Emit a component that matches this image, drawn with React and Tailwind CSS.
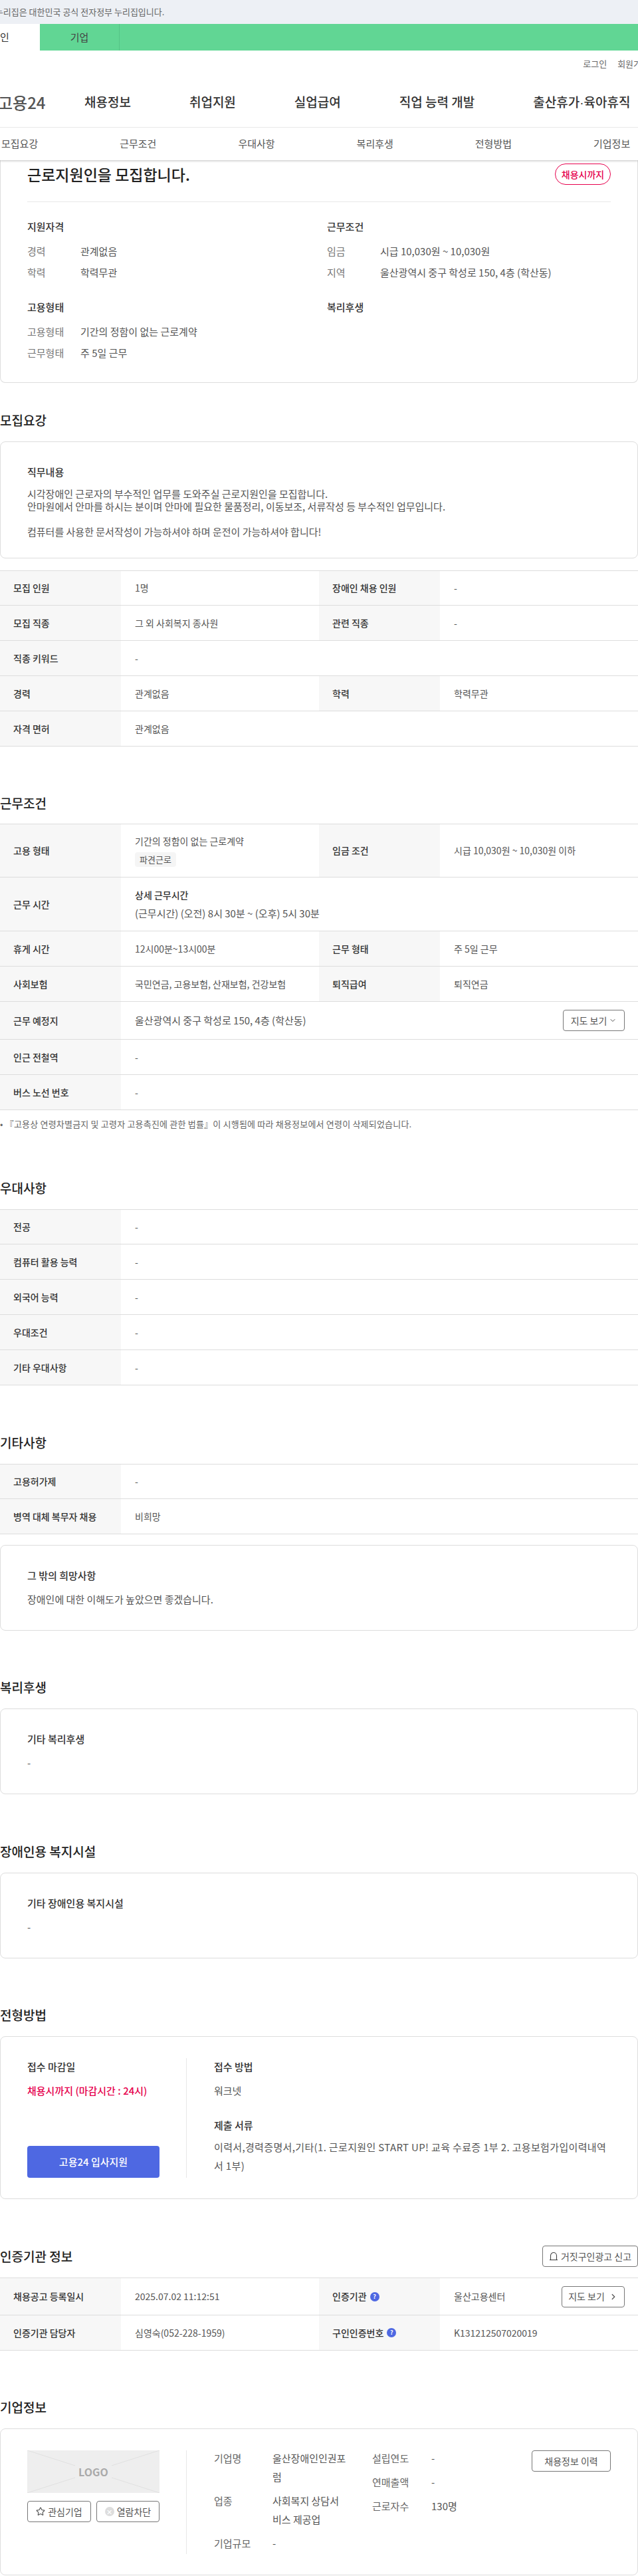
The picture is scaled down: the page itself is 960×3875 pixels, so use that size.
import React from 'react';
import { ChevronDown, ChevronRight, Star } from 'lucide-react';

const SUB_NAV = ['모집요강', '근무조건', '우대사항', '복리후생', '전형방법', '기업정보'];

function Heading({ children, className = '' }) {
  return <h2 className={`h-[28px] leading-[28px] text-[19px] font-medium text-[#222] ${className}`}>{children}</h2>;
}

function Th({ children, className = '' }) {
  return (
    <div className={`w-[182px] flex-shrink-0 self-stretch bg-[#f7f7f7] pl-[20px] flex items-center text-[14px] font-medium text-[#333] ${className}`}>
      {children}
    </div>
  );
}

function Td({ children, className = '' }) {
  return <div className={`pl-[21px] flex items-center text-[14px] text-[#555] ${className}`}>{children}</div>;
}

// row with one or two label/value pairs
function Row({ cells, h = 'h-[53px] first:h-[52px]' }) {
  return (
    <div className={`flex border-b border-[#ddd] ${h}`}>
      {cells.map(([label, value], i) => (
        <React.Fragment key={i}>
          <Th>{label}</Th>
          <Td className={cells.length === 2 && i === 0 ? 'w-[298px]' : 'flex-1'}>{value}</Td>
        </React.Fragment>
      ))}
    </div>
  );
}

function Table({ rows, className = 'mt-[18px]' }) {
  return (
    <div className={`border-t border-[#ddd] ${className}`}>
      {rows.map((cells, i) => <Row key={i} cells={cells} />)}
    </div>
  );
}

function TextCard({ title, children, className = 'mt-[18px]', pb = 'pb-[37px]' }) {
  return (
    <div className={`border border-[#ddd] rounded-[8px] px-[40px] pt-[32px] ${pb} ${className}`}>
      <h3 className="h-[26px] leading-[26px] text-[15px] font-medium text-[#333]">{title}</h3>
      {children}
    </div>
  );
}

function SummaryBlock({ title, rows, className = '' }) {
  return (
    <div className={className}>
      <h3 className="h-[26px] leading-[26px] text-[15px] font-medium text-[#333]">{title}</h3>
      <div className="mt-[11px] flex flex-col gap-[6px]">
        {rows.map(([label, value]) => (
          <div key={label} className="flex h-[26px] items-center text-[15px]">
            <span className="w-[80px] text-[#777]">{label}</span>
            <span className="text-[#555]">{value}</span>
          </div>
        ))}
      </div>
    </div>
  );
}

function HelpDot() {
  return (
    <span className="ml-[5px] inline-flex h-[14px] w-[14px] items-center justify-center rounded-full bg-[#4e68e2] text-[9px] font-bold text-white">?</span>
  );
}

function OutlineBtn({ children, className = '' }) {
  return (
    <button className={`flex items-center justify-center border border-[#777] rounded-[4px] bg-white text-[14px] text-[#555] ${className}`}>
      {children}
    </button>
  );
}

function Header() {
  return (
    <header className="relative z-10 bg-white shadow-[0_1px_3px_rgba(0,0,0,0.25)]">
      <div className="h-[36px] bg-[#edf0f5] -ml-[22px] flex items-center text-[13px] text-[#666]">
        이 누리집은 대한민국 공식 전자정부 누리집입니다.
      </div>
      <div className="h-[40px] bg-[#61d694] flex text-[15px] text-[#444]">
        <div className="-ml-[60px] w-[120px] bg-white flex items-center justify-center flex-shrink-0 text-[#333]">개인</div>
        <div className="w-[120px] border-r border-[#56c486] flex items-center justify-center flex-shrink-0">기업</div>
      </div>
      <div className="h-[116px] border-b border-[#e8e8e8]">
        <div className="flex justify-end gap-[16px] -mr-[17px] pt-[10px] text-[13px] text-[#666] leading-[20px] whitespace-nowrap">
          <span>로그인</span>
          <span>회원가입</span>
        </div>
        <div className="flex items-center mt-[28px] h-[40px] whitespace-nowrap">
          <div className="-ml-[3px] w-[77px] flex-shrink-0 text-[24px] font-medium text-[#555]">고용24</div>
          <nav className="ml-[53px] flex gap-[88px] text-[19px] font-medium text-[#333]">
            <span>채용정보</span>
            <span>취업지원</span>
            <span>실업급여</span>
            <span>직업 능력 개발</span>
            <span>출산휴가<span className="font-['Liberation_Sans',sans-serif]">·</span>육아휴직</span>
          </nav>
        </div>
      </div>
      <nav className="h-[49px] pl-[2px] flex items-center gap-[123px] text-[15px] text-[#555] whitespace-nowrap">
        {SUB_NAV.map((s) => <span key={s}>{s}</span>)}
      </nav>
    </header>
  );
}

export default function App() {
  return (
    <div className="w-[960px] h-[3875px] overflow-hidden bg-white font-['Noto_Sans_CJK_KR','Noto_Sans',sans-serif]">
      <Header />

      {/* summary card, its top runs under the sticky header */}
      <section className="border border-t-0 border-[#ddd] rounded-b-[8px] h-[335px] px-[40px]">
        <div className="flex items-center justify-between pt-[5px] h-[37px]">
          <h1 className="text-[23px] font-medium text-[#222] leading-[32px] -mt-[1px]">근로지원인을 모집합니다.</h1>
          <span className="h-[32px] w-[84px] rounded-full border border-[#e6004d] flex items-center justify-center text-[14px] font-medium text-[#e6004d]">채용시까지</span>
        </div>
        <div className="mt-[25px] border-t border-[#e8e8e8]" />
        <div className="mt-[24px] grid grid-cols-[451px_1fr] gap-y-[26px]">
          <SummaryBlock title="지원자격" rows={[['경력', '관계없음'], ['학력', '학력무관']]} />
          <SummaryBlock title="근무조건" rows={[['임금', '시급 10,030원 ~ 10,030원'], ['지역', '울산광역시 중구 학성로 150, 4층 (학산동)']]} />
          <SummaryBlock title="고용형태" rows={[['고용형태', '기간의 정함이 없는 근로계약'], ['근무형태', '주 5일 근무']]} />
          <SummaryBlock title="복리후생" rows={[]} />
        </div>
      </section>

      <Heading className="mt-[42px]">모집요강</Heading>
      <TextCard title="직무내용" pb="pb-[30px]">
        <p className="mt-[10px] text-[15px] leading-[19px] text-[#555]">
          시각장애인 근로자의 부수적인 업무를 도와주실 근로지원인을 모집합니다.<br />
          안마원에서 안마를 하시는 분이며 안마에 필요한 물품정리, 이동보조, 서류작성 등 부수적인 업무입니다.<br />
          <br />
          컴퓨터를 사용한 문서작성이 가능하셔야 하며 운전이 가능하셔야 합니다!
        </p>
      </TextCard>
      <Table rows={[
        [['모집 인원', '1명'], ['장애인 채용 인원', '-']],
        [['모집 직종', '그 외 사회복지 종사원'], ['관련 직종', '-']],
        [['직종 키워드', '-']],
        [['경력', '관계없음'], ['학력', '학력무관']],
        [['자격 면허', '관계없음']],
      ]} />

      <Heading className="mt-[71px]">근무조건</Heading>
      <div className="mt-[17px] border-t border-[#ddd]">
        <Row h="h-[80px]" cells={[
          ['고용 형태', (
            <div>
              <div className="leading-[20px]">기간의 정함이 없는 근로계약</div>
              <span className="mt-[7px] inline-block h-[22px] leading-[22px] px-[7px] rounded-[4px] bg-[#f5f5f5] text-[13px] text-[#555]">파견근로</span>
            </div>
          )],
          ['임금 조건', '시급 10,030원 ~ 10,030원 이하'],
        ]} />
        <Row h="h-[81px]" cells={[
          ['근무 시간', (
            <div className="text-[15px]">
              <div className="leading-[28px] font-medium text-[14px] text-[#333]">상세 근무시간</div>
              <div className="leading-[28px]">(근무시간) (오전) 8시 30분 ~ (오후) 5시 30분</div>
            </div>
          )],
        ]} />
        <Row h="h-[53px]" cells={[['휴게 시간', '12시00분~13시00분'], ['근무 형태', '주 5일 근무']]} />
        <Row h="h-[53px]" cells={[['사회보험', '국민연금, 고용보험, 산재보험, 건강보험'], ['퇴직급여', '퇴직연금']]} />
        <div className="flex h-[57px] border-b border-[#ddd]">
          <Th>근무 예정지</Th>
          <Td className="flex-1 justify-between pr-[20px] text-[15px]">
            <span>울산광역시 중구 학성로 150, 4층 (학산동)</span>
            <OutlineBtn className="h-[32px] w-[93px] gap-[3px]">지도 보기 <ChevronDown size={12} /></OutlineBtn>
          </Td>
        </div>
        <Row h="h-[53px]" cells={[['인근 전철역', '-']]} />
        <Row h="h-[53px]" cells={[['버스 노선 번호', '-']]} />
      </div>
      <p className="mt-[11px] h-[20px] leading-[20px] text-[13px] tracking-[0.2px] text-[#666] whitespace-nowrap">
        • 『고용상 연령차별금지 및 고령자 고용촉진에 관한 법률』이 시행됨에 따라 채용정보에서 연령이 삭제되었습니다.
      </p>

      <Heading className="mt-[72px]">우대사항</Heading>
      <Table rows={[
        [['전공', '-']],
        [['컴퓨터 활용 능력', '-']],
        [['외국어 능력', '-']],
        [['우대조건', '-']],
        [['기타 우대사항', '-']],
      ]} />

      <Heading className="mt-[72px]">기타사항</Heading>
      <Table rows={[
        [['고용허가제', '-']],
        [['병역 대체 복무자 채용', '비희망']],
      ]} />
      <TextCard title="그 밖의 희망사항" className="mt-[16px]">
        <p className="mt-[13px] text-[15px] leading-[19px] text-[#555]">장애인에 대한 이해도가 높았으면 좋겠습니다.</p>
      </TextCard>

      <Heading className="mt-[71px]">복리후생</Heading>
      <TextCard title="기타 복리후생">
        <p className="mt-[13px] text-[15px] leading-[19px] text-[#555]">-</p>
      </TextCard>

      <Heading className="mt-[72px]">장애인용 복지시설</Heading>
      <TextCard title="기타 장애인용 복지시설">
        <p className="mt-[13px] text-[15px] leading-[19px] text-[#555]">-</p>
      </TextCard>

      <Heading className="mt-[71px]">전형방법</Heading>
      <div className="mt-[18px] h-[245px] border border-[#ddd] rounded-[8px] px-[40px] pt-[32px] flex">
        <div className="w-[240px] flex-shrink-0 border-r border-[#e8e8e8] pr-[40px] h-[180px] flex flex-col">
          <h3 className="h-[26px] leading-[26px] text-[15px] font-medium text-[#333]">접수 마감일</h3>
          <p className="mt-[10px] h-[26px] leading-[26px] text-[15px] font-medium text-[#e6004d]">채용시까지 (마감시간 : 24시)</p>
          <button className="mt-auto h-[48px] rounded-[4px] bg-[#4e68e2] text-[15px] font-medium text-white">고용24 입사지원</button>
        </div>
        <div className="pl-[41px] flex-1">
          <h3 className="h-[26px] leading-[26px] text-[15px] font-medium text-[#333]">접수 방법</h3>
          <p className="mt-[10px] h-[26px] leading-[26px] text-[15px] text-[#555]">워크넷</p>
          <h3 className="mt-[26px] h-[26px] leading-[26px] text-[15px] font-medium text-[#333]">제출 서류</h3>
          <p className="mt-[6px] text-[15px] leading-[28px] tracking-[0.35px] text-[#555] break-all">이력서,경력증명서,기타(1. 근로지원인 START UP! 교육 수료증 1부 2. 고용보험가입이력내역서 1부)</p>
        </div>
      </div>

      <div className="mt-[70px] flex items-center justify-between">
        <Heading>인증기관 정보</Heading>
        <OutlineBtn className="h-[32px] w-[144px] gap-[4px]">
          <svg width="14" height="14" viewBox="0 0 14 14" fill="none" stroke="#444" strokeWidth="1.1">
            <path d="M2.5 12.5V6a4.5 4.5 0 0 1 9 0v6.5" />
            <path d="M1 12.5h12" />
          </svg>
          거짓구인광고 신고
        </OutlineBtn>
      </div>
      <div className="mt-[16px] border-t border-[#ddd]">
        <div className="flex h-[56px] border-b border-[#ddd]">
          <Th>채용공고 등록일시</Th>
          <Td className="w-[298px]">2025.07.02 11:12:51</Td>
          <Th>인증기관<HelpDot /></Th>
          <Td className="flex-1 justify-between pr-[20px]">
            <span>울산고용센터</span>
            <OutlineBtn className="h-[32px] w-[95px] gap-[6px]">지도 보기 <ChevronRight size={14} strokeWidth={2.2} /></OutlineBtn>
          </Td>
        </div>
        <Row h="h-[53px]" cells={[['인증기관 담당자', '심영숙(052-228-1959)'], [<span key="n" className="flex items-center">구인인증번호<HelpDot /></span>, 'K131212507020019']]} />
      </div>

      <Heading className="mt-[71px]">기업정보</Heading>
      <div className="mt-[18px] h-[221px] border border-[#ddd] rounded-[8px] px-[40px] pt-[32px] flex">
        <div className="w-[240px] flex-shrink-0 border-r border-[#e8e8e8] pr-[40px] h-[156px]">
          <div className="relative h-[64px] bg-[#eeeeee] flex items-center justify-center text-[16px] font-bold text-[#aaa]">
            <svg className="absolute inset-0" width="199" height="64" viewBox="0 0 199 64" stroke="#e0e0e0" strokeWidth="1">
              <path d="M0 0L72 23M199 0L127 23M0 64L72 41M199 64L127 41" />
            </svg>
            LOGO
          </div>
          <div className="mt-[12px] flex justify-between">
            <OutlineBtn className="h-[32px] w-[96px] gap-[4px]"><Star size={14} />관심기업</OutlineBtn>
            <OutlineBtn className="h-[32px] w-[95px] gap-[4px]">
              <span className="h-[14px] w-[14px] rounded-full bg-[#ddd] flex items-center justify-center text-[11px] leading-none text-white">✕</span>
              열람차단
            </OutlineBtn>
          </div>
        </div>
        <div className="pl-[41px] flex-1 flex items-start text-[15px] text-[#555]">
          <div className="w-[238px] flex-shrink-0">
            <div className="flex leading-[28px] -mt-[2px]">
              <span className="w-[88px] flex-shrink-0 text-[#666]">기업명</span>
              <span className="w-[112px] break-all">울산장애인인권포럼</span>
            </div>
            <div className="mt-[8px] flex leading-[28px]">
              <span className="w-[88px] flex-shrink-0 text-[#666]">업종</span>
              <span className="w-[112px]">사회복지 상담서비스 제공업</span>
            </div>
            <div className="mt-[8px] flex leading-[28px]">
              <span className="w-[88px] flex-shrink-0 text-[#666]">기업규모</span>
              <span>-</span>
            </div>
          </div>
          <div className="-mt-[2px] flex flex-col gap-[8px] leading-[28px]">
            <div className="flex"><span className="w-[89px] text-[#666]">설립연도</span><span>-</span></div>
            <div className="flex"><span className="w-[89px] text-[#666]">연매출액</span><span>-</span></div>
            <div className="flex"><span className="w-[89px] text-[#666]">근로자수</span><span>130명</span></div>
          </div>
          <OutlineBtn className="ml-auto h-[32px] w-[119px] flex-shrink-0">채용정보 이력</OutlineBtn>
        </div>
      </div>
    </div>
  );
}
